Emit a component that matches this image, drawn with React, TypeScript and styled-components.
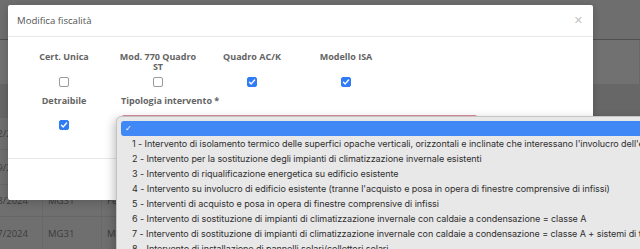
import React from "react";
import styled, { createGlobalStyle } from "styled-components";

const GlobalStyle = createGlobalStyle`
  html, body { margin: 0; padding: 0; overflow: hidden; background: #6f6f6f; }
  * { box-sizing: border-box; }
`;

const Page = styled.div`
  position: relative;
  width: 640px;
  height: 249px;
  overflow: hidden;
  background: #6f6f6f;
  font-family: "Open Sans", "Liberation Sans", sans-serif;
`;

/* ---------- background table (behind the modal backdrop) ---------- */
const Backdrop = styled.div`
  display: flex;
  flex-direction: column;
  width: 100%;
`;

const TopBar = styled.div`
  height: 40px;
  background: #6e6e6e;
  border-bottom: 1px solid #4f4f4f;
`;

const TableRow = styled.div<{ $h: number; $bg: string }>`
  display: grid;
  grid-template-columns: 43px 59px 1fr;
  height: ${(p) => p.$h}px;
  background: ${(p) => p.$bg};
  border-bottom: 1px solid #666;
`;

const Cell = styled.div<{ $end?: boolean }>`
  display: flex;
  align-items: center;
  justify-content: ${(p) => (p.$end ? "flex-end" : "flex-start")};
  padding: ${(p) => (p.$end ? "0 14px 0 0" : "0 0 0 5px")};
  border-right: 1px solid #686868;
  color: #3c3c3c;
  font-size: 9.5px;
  white-space: nowrap;
  overflow: hidden;
`;

/* ---------- modal ---------- */
const Modal = styled.div`
  position: absolute;
  left: 8px;
  top: 5px;
  width: 585px;
  background: #fff;
  border-radius: 2px;
  box-shadow: 0 2px 8px rgba(0, 0, 0, 0.2);
`;

const ModalHeader = styled.div`
  display: flex;
  align-items: center;
  justify-content: space-between;
  height: 32px;
  padding: 0 10px 0 9px;
  border-bottom: 1px solid #e8e8e8;
`;

const Title = styled.div`
  font-size: 9.6px;
  color: #555;
`;

const Close = styled.div`
  font-family: "DejaVu Sans", sans-serif;
  font-size: 11px;
  color: #c4c4c4;
  line-height: 1;
`;

const ModalBody = styled.div`
  display: grid;
  grid-template-columns: repeat(4, 94px);
  grid-template-rows: auto auto;
  row-gap: 9px;
  padding: 15px 9px 23px;
  border-bottom: 1px solid #e8e8e8;
`;

const CheckField = styled.div`
  display: flex;
  flex-direction: column;
  align-items: center;
  padding: 0 8px;
`;

const Label = styled.div<{ $min?: number }>`
  min-height: ${(p) => p.$min ?? 10}px;
  font-size: 9px;
  line-height: 10px;
  font-weight: 700;
  color: #646464;
  text-align: center;
`;

const ControlLine = styled.div<{ $h: number; $mt: number }>`
  display: flex;
  align-items: center;
  height: ${(p) => p.$h}px;
  margin-top: ${(p) => p.$mt}px;
`;

const Box = styled.div<{ $on?: boolean }>`
  width: 10px;
  height: 10px;
  border-radius: 2px;
  display: flex;
  align-items: center;
  justify-content: center;
  background: ${(p) => (p.$on ? "#2f7cf6" : "#fff")};
  border: 1px solid ${(p) => (p.$on ? "#2f7cf6" : "#9a9a9a")};
`;

const SelectField = styled.div`
  grid-column: 2 / span 3;
  display: flex;
  flex-direction: column;
  padding-left: 10px;
`;

const SelectLabel = styled.div`
  font-size: 9px;
  line-height: 10px;
  font-weight: 700;
  color: #646464;
`;

const SelectBox = styled.div`
  width: 357px;
  height: 20px;
  margin-top: 9px;
  border: 1px solid #dc8d98;
  border-radius: 3px;
  background: #fff;
`;

const ModalFooter = styled.div`
  height: 41px;
`;

/* ---------- native dropdown list ---------- */
const Dropdown = styled.div`
  position: absolute;
  left: 116px;
  top: 116px;
  width: 560px;
  height: 160px;
  padding: 4px 4px;
  background: #e8e8e8;
  border: 1px solid #c4c4c4;
  border-radius: 5px;
  box-shadow: -2px 3px 10px rgba(0, 0, 0, 0.25);
  font-family: Inter, "Noto Sans", sans-serif;
`;

const Option = styled.div<{ $active?: boolean }>`
  display: flex;
  align-items: center;
  height: 15px;
  padding-left: 11px;
  border-radius: 3px;
  font-size: 9px;
  letter-spacing: -0.06px;
  white-space: nowrap;
  color: ${(p) => (p.$active ? "#fff" : "#2e2e2e")};
  background: ${(p) => (p.$active ? "#3f88f6" : "transparent")};
`;

const Tick = styled.span`
  margin-left: -7px;
  font-family: "DejaVu Sans", sans-serif;
  font-size: 8px;
  color: #fff;
`;

const Check = () => (
  <svg width="8" height="8" viewBox="0 0 8 8">
    <path d="M1.5 4.2 L3.2 5.9 L6.6 2" fill="none" stroke="#fff" strokeWidth="1.4" strokeLinecap="round" strokeLinejoin="round" />
  </svg>
);

const options = [
  "1 - Intervento di isolamento termico delle superfici opache verticali, orizzontali e inclinate che interessano l'involucro dell'edificio",
  "2 - Intervento per la sostituzione degli impianti di climatizzazione invernale esistenti",
  "3 - Intervento di riqualificazione energetica su edificio esistente",
  "4 - Intervento su involucro di edificio esistente (tranne l'acquisto e posa in opera di finestre comprensive di infissi)",
  "5 - Interventi di acquisto e posa in opera di finestre comprensive di infissi",
  "6 - Intervento di sostituzione di impianti di climatizzazione invernale con caldaie a condensazione = classe A",
  "7 - Intervento di sostituzione di impianti di climatizzazione invernale con caldaie a condensazione = classe A + sistemi di termoregolazione evoluti",
  "8 - Intervento di installazione di pannelli solari/collettori solari",
];

const checks = [
  { label: "Cert. Unica", on: false },
  { label: "Mod. 770 Quadro ST", on: false },
  { label: "Quadro AC/K", on: true },
  { label: "Modello ISA", on: true },
];

const rows = [
  { h: 45, bg: "#717171", a: "", b: "", c: "" },
  { h: 33, bg: "#676767", a: "", b: "", c: "" },
  { h: 32, bg: "#6f6f6f", a: "01/12/2024", b: "MG31", c: "Fe" },
  { h: 35, bg: "#6f6f6f", a: "01/09/2024", b: "MG31", c: "Fe" },
  { h: 32, bg: "#6f6f6f", a: "01/08/2024", b: "MG31", c: "Fe" },
  { h: 33, bg: "#6f6f6f", a: "01/07/2024", b: "MG31", c: "Mi" },
];

export default function App() {
  return (
    <>
      <GlobalStyle />
      <Page>
        <Backdrop>
          <TopBar />
          {rows.map((r, i) => (
            <TableRow key={i} $h={r.h} $bg={r.bg}>
              <Cell $end>{r.a}</Cell>
              <Cell>{r.b}</Cell>
              <Cell>{r.c}</Cell>
            </TableRow>
          ))}
        </Backdrop>

        <Modal>
          <ModalHeader>
            <Title>Modifica fiscalità</Title>
            <Close>✕</Close>
          </ModalHeader>
          <ModalBody>
            {checks.map((c) => (
              <CheckField key={c.label}>
                <Label $min={20}>{c.label}</Label>
                <ControlLine $h={10} $mt={5}>
                  <Box $on={c.on}>{c.on && <Check />}</Box>
                </ControlLine>
              </CheckField>
            ))}
            <CheckField>
              <Label>Detraibile</Label>
              <ControlLine $h={20} $mt={9}>
                <Box $on>
                  <Check />
                </Box>
              </ControlLine>
            </CheckField>
            <SelectField>
              <SelectLabel>Tipologia intervento *</SelectLabel>
              <SelectBox />
            </SelectField>
          </ModalBody>
          <ModalFooter />
        </Modal>

        <Dropdown>
          <Option $active>
            <Tick>✓</Tick>
          </Option>
          {options.map((o) => (
            <Option key={o}>{o}</Option>
          ))}
        </Dropdown>
      </Page>
    </>
  );
}
